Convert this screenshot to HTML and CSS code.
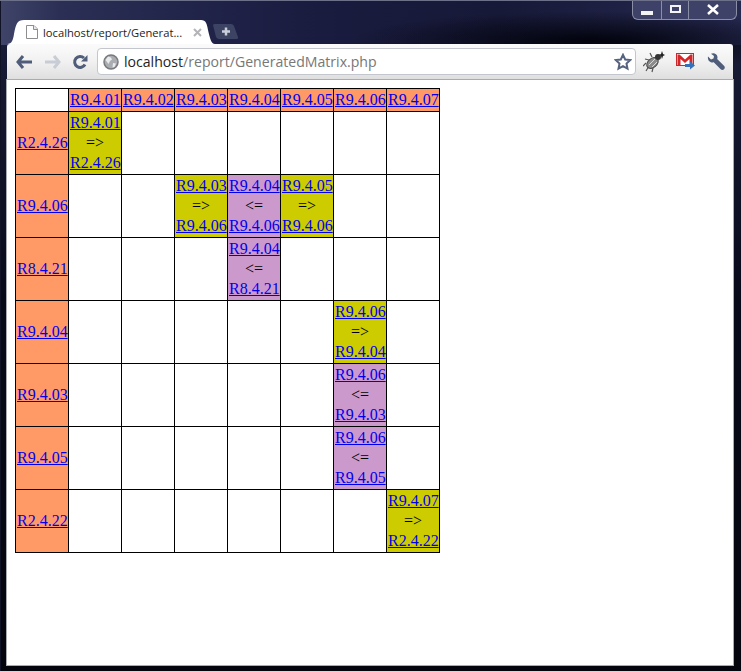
FILE: index.html
```html
<!DOCTYPE html>
<html lang="en">
<head>
    <meta charset="UTF-8">
    <meta name="viewport" content="width=device-width, initial-scale=1.0">
    <title>GeneratedMatrix</title>
    <link rel="stylesheet" href="styles.css">
</head>
<body>
    <div class="window">
        <div class="titlebar">
            <div class="tab">
                <svg class="favicon" width="12" height="14" viewBox="0 0 12 14"><path d="M.5.5h7.5l3.5 3.5v9.500h-11z" fill="#fff" stroke="#8d8d8d"/><path d="M7.500.5v4h4" fill="#e8e8e8" stroke="#8d8d8d"/></svg>
                <span class="tab-title">localhost/report/Generat...</span>
                <svg class="tab-close" width="9" height="9" viewBox="0 0 9 9"><path d="M1 1l7 7M8 1l-7 7" stroke="#b4b4b8" stroke-width="2"/></svg>
            </div>
            <svg class="new-tab" width="26" height="15" viewBox="0 0 26 15"><path d="M0 1q0-1 2-1h16q2 0 3 2l4 11q.5 2-2 2H6q-2 0-3-2z" fill="#3c4363"/><path d="M13 3.500v8M9 7.500h8" stroke="#c9cedb" stroke-width="2.500"/></svg>
            <div class="controls">
                <div class="ctl ctl-min"><span class="min-bar"></span></div>
                <div class="ctl ctl-max"><span class="max-box"></span></div>
                <div class="ctl ctl-close"><svg width="14" height="11" viewBox="0 0 14 11"><path d="M2 1l10 9M12 1l-10 9" stroke="#fff" stroke-width="2.600"/></svg></div>
            </div>
        </div>
        <div class="toolbar">
            <svg class="nav nav-back" width="16" height="14" viewBox="0 0 16 14"><path d="M7 1L2 7l5 6M2 7h14" fill="none" stroke="#4f5c7a" stroke-width="3"/></svg>
            <svg class="nav nav-fwd" width="16" height="14" viewBox="0 0 16 14"><path d="M9 1l5 6-5 6M14 7H0" fill="none" stroke="#c8ccd5" stroke-width="3"/></svg>
            <svg class="nav nav-reload" width="16" height="16" viewBox="0 0 16 16"><path d="M13 10.500A5.500 5.500 0 1 1 12 4" fill="none" stroke="#4f5c7a" stroke-width="3"/><path d="M15.500 1v6.500H9z" fill="#4f5c7a"/></svg>
            <div class="omnibox">
                <svg class="globe" width="16" height="16" viewBox="0 0 16 16"><circle cx="8" cy="8" r="7" fill="#a9adb2" stroke="#77797d" stroke-width="1.500"/><path d="M5 2.500l3 1 1 2-2 1.500-1.500 3L4 8 2.500 6zM10 9l3 .5-1.500 3.500-2 .5z" fill="#e9eaec"/></svg>
                <span class="url"><span class="host">localhost</span>/report/GeneratedMatrix.php</span>
                <svg class="star" width="18" height="18" viewBox="0 0 18 18"><path d="M9 1.800l2.200 4.700 5 .6-3.700 3.500 1 5.100L9 13.200l-4.500 2.500 1-5.100L1.800 7.100l5-.6z" fill="#fff" stroke="#55637f" stroke-width="2"/></svg>
            </div>
            <svg class="ext ext-bug" width="22" height="22" viewBox="0 0 22 22"><path d="M3 12l-3 3M6 15l-3 5M10 17l-1 4M6 9L2 8M9 6L7 2" stroke="#555" stroke-width="1.200"/><ellipse cx="9.500" cy="12" rx="6.500" ry="4.500" transform="rotate(-40 9.500 12)" fill="#8b8b8b" stroke="#4a4a4a"/><path d="M6 14l6-6M9 16l5-5" stroke="#d8d8d8"/><circle cx="15" cy="6" r="3" fill="#333"/><path d="M19 0l1 3 2 1-2 1-1 3-1-3-2-1 2-1z" fill="#222"/></svg>
            <svg class="ext ext-mail" width="19" height="17" viewBox="0 0 19 17"><rect x=".5" y=".5" width="17" height="12" fill="#fff" stroke="#c8272b"/><path d="M1.500 12V1.500h2L9 6.500l5.500-5h2V12h-3V6L9 10 4.500 6v6z" fill="#d3262a"/><path d="M9 11h5V8.500l5 4-5 4V14H9z" fill="#3570b8"/></svg>
            <svg class="ext ext-wrench" width="18" height="18" viewBox="0 0 18 18"><path d="M1 3.500l3 3 2.500-1L7 3 4 .8C6.500-.5 10 .5 10.500 4c0 1-.1 1.500-.3 2l7 7c1 1.200.6 2.500-.2 3.300-.8.800-2.200 1.100-3.300 0l-7-7C4 10 .2 8 1 3.500z" fill="#4f5c7a"/></svg>
        </div>
        <div class="page">
            <table class="matrix">
                <tr>
                    <td></td>
                    <td class="head"><a href="#">R9.4.01</a></td>
                    <td class="head"><a href="#">R9.4.02</a></td>
                    <td class="head"><a href="#">R9.4.03</a></td>
                    <td class="head"><a href="#">R9.4.04</a></td>
                    <td class="head"><a href="#">R9.4.05</a></td>
                    <td class="head"><a href="#">R9.4.06</a></td>
                    <td class="head"><a href="#">R9.4.07</a></td>
                </tr>
                <tr>
                    <td class="head"><a href="#">R2.4.26</a></td>
                    <td class="dep"><a href="#">R9.4.01</a><br>=&gt;<br><a href="#">R2.4.26</a></td>
                    <td></td><td></td><td></td><td></td><td></td><td></td>
                </tr>
                <tr>
                    <td class="head"><a href="#">R9.4.06</a></td>
                    <td></td><td></td>
                    <td class="dep"><a href="#">R9.4.03</a><br>=&gt;<br><a href="#">R9.4.06</a></td>
                    <td class="rev"><a href="#">R9.4.04</a><br>&lt;=<br><a href="#">R9.4.06</a></td>
                    <td class="dep"><a href="#">R9.4.05</a><br>=&gt;<br><a href="#">R9.4.06</a></td>
                    <td></td><td></td>
                </tr>
                <tr>
                    <td class="head"><a href="#">R8.4.21</a></td>
                    <td></td><td></td><td></td>
                    <td class="rev"><a href="#">R9.4.04</a><br>&lt;=<br><a href="#">R8.4.21</a></td>
                    <td></td><td></td><td></td>
                </tr>
                <tr>
                    <td class="head"><a href="#">R9.4.04</a></td>
                    <td></td><td></td><td></td><td></td><td></td>
                    <td class="dep"><a href="#">R9.4.06</a><br>=&gt;<br><a href="#">R9.4.04</a></td>
                    <td></td>
                </tr>
                <tr>
                    <td class="head"><a href="#">R9.4.03</a></td>
                    <td></td><td></td><td></td><td></td><td></td>
                    <td class="rev"><a href="#">R9.4.06</a><br>&lt;=<br><a href="#">R9.4.03</a></td>
                    <td></td>
                </tr>
                <tr>
                    <td class="head"><a href="#">R9.4.05</a></td>
                    <td></td><td></td><td></td><td></td><td></td>
                    <td class="rev"><a href="#">R9.4.06</a><br>&lt;=<br><a href="#">R9.4.05</a></td>
                    <td></td>
                </tr>
                <tr>
                    <td class="head"><a href="#">R2.4.22</a></td>
                    <td></td><td></td><td></td><td></td><td></td><td></td>
                    <td class="dep"><a href="#">R9.4.07</a><br>=&gt;<br><a href="#">R2.4.22</a></td>
                </tr>
            </table>
        </div>
    </div>
</body>
</html>
```

FILE: styles.css
```css
html, body {
    margin: 0;
    padding: 0;
    height: 671px;
    overflow: hidden;
}
body {
    background: #05060f;
    font-family: "Open Sans", sans-serif;
}
.window {
    height: 671px;
    box-sizing: border-box;
    padding: 0 8px 6px 7px;
    display: flex;
    flex-direction: column;
    background:
        radial-gradient(ellipse 240px 30px at 590px 40px, #02030c 0%, rgba(2, 3, 12, 0) 100%),
        linear-gradient(90deg, #3f4468 0, #2b2f55 60px, #1a1c40 300px, #171938 500px, #262950 741px) top / 100% 44px no-repeat,
        linear-gradient(180deg, #1b1e3a 0, #080a1a 300px, #04050c 671px);
    border-top: 1px solid #6c7088;
    box-shadow: inset 1px 0 0 #101226;
}

/* tab strip */
.titlebar {
    height: 43px;
    display: flex;
    align-items: flex-end;
    flex-shrink: 0;
}
.tab {
    width: 208px;
    height: 24px;
    flex-shrink: 0;
    display: flex;
    align-items: center;
    background: #fff;
    clip-path: path("M0 24 C5 24 6 20 7 14 C9 4 10 0 17 0 H194 C199 0 200 4 201 10 C203 18 204 24 208 24 Z");
}
.favicon {
    margin-left: 19px;
    flex-shrink: 0;
}
.tab-title {
    margin-left: 5px;
    width: 143px;
    font-size: 11.200px;
    color: #222;
    white-space: nowrap;
}
.tab-close {
    margin-left: 7px;
}
.new-tab {
    margin: 0 0 5px -2px;
    flex-shrink: 0;
}
.controls {
    align-self: flex-start;
    margin-left: auto;
    margin-right: -4px;
    height: 18px;
    display: flex;
    border: 1px solid #8b8fa6;
    border-top: none;
    border-radius: 0 0 6px 6px;
    background: #3e4268;
}
.ctl {
    display: flex;
    align-items: center;
    justify-content: center;
    border-right: 1px solid #8b8fa6;
}
.ctl-min { width: 28px; }
.ctl-max { width: 26px; }
.ctl-close { width: 47px; border-right: none; }
.min-bar {
    width: 12px;
    height: 4px;
    margin-top: 6px;
    background: #f4f4f6;
}
.max-box {
    width: 7px;
    height: 4px;
    border: 2px solid #f4f4f6;
    border-top-width: 2px;
    margin-bottom: 3px;
}
.ctl-close svg {
    margin-bottom: 1px;
}

/* address bar row */
.toolbar {
    height: 36px;
    flex-shrink: 0;
    display: flex;
    align-items: center;
    box-sizing: border-box;
    padding-left: 9px;
    background: linear-gradient(180deg, #fbfbfb 0, #f1f1f1 50%, #dfdfdf 100%);
    border-bottom: 1px solid #b4b6ba;
    border-radius: 3px 3px 0 0;
}
.nav {
    flex-shrink: 0;
}
.nav-back { margin-right: 13px; }
.nav-fwd { margin-right: 11px; }
.nav-reload { margin-right: 9px; }
.omnibox {
    width: 539px;
    height: 27px;
    flex-shrink: 0;
    box-sizing: border-box;
    display: flex;
    align-items: center;
    padding: 0 3px 0 5px;
    background: #fff;
    border: 1px solid #c3c6cd;
    border-radius: 4px;
}
.globe {
    flex-shrink: 0;
}
.url {
    margin-left: 5px;
    font-size: 14.100px;
    color: #777;
    white-space: nowrap;
    flex-grow: 1;
}
.host {
    color: #222;
}
.ext {
    flex-shrink: 0;
}
.ext-bug { margin-left: 7px; }
.ext-mail { margin-left: 11px; }
.ext-wrench { margin-left: 12px; }

/* report */
.page {
    flex-grow: 1;
    background: #fff;
    padding: 8px;
    box-shadow: 0 0 0 1px #a9abb3;
}
.matrix {
    border-collapse: collapse;
    table-layout: fixed;
    width: 425px;
    font-family: "Liberation Serif", serif;
    font-size: 16px;
    line-height: 20px;
    color: #000;
}
.matrix td {
    width: 53px;
    box-sizing: border-box;
    padding: 1px;
    border: 1px solid #000;
    text-align: center;
    white-space: nowrap;
}
.matrix a {
    color: #00e;
}
.head {
    background: #f96;
}
.dep {
    background: #cc0;
}
.rev {
    background: #c9c;
}
```
